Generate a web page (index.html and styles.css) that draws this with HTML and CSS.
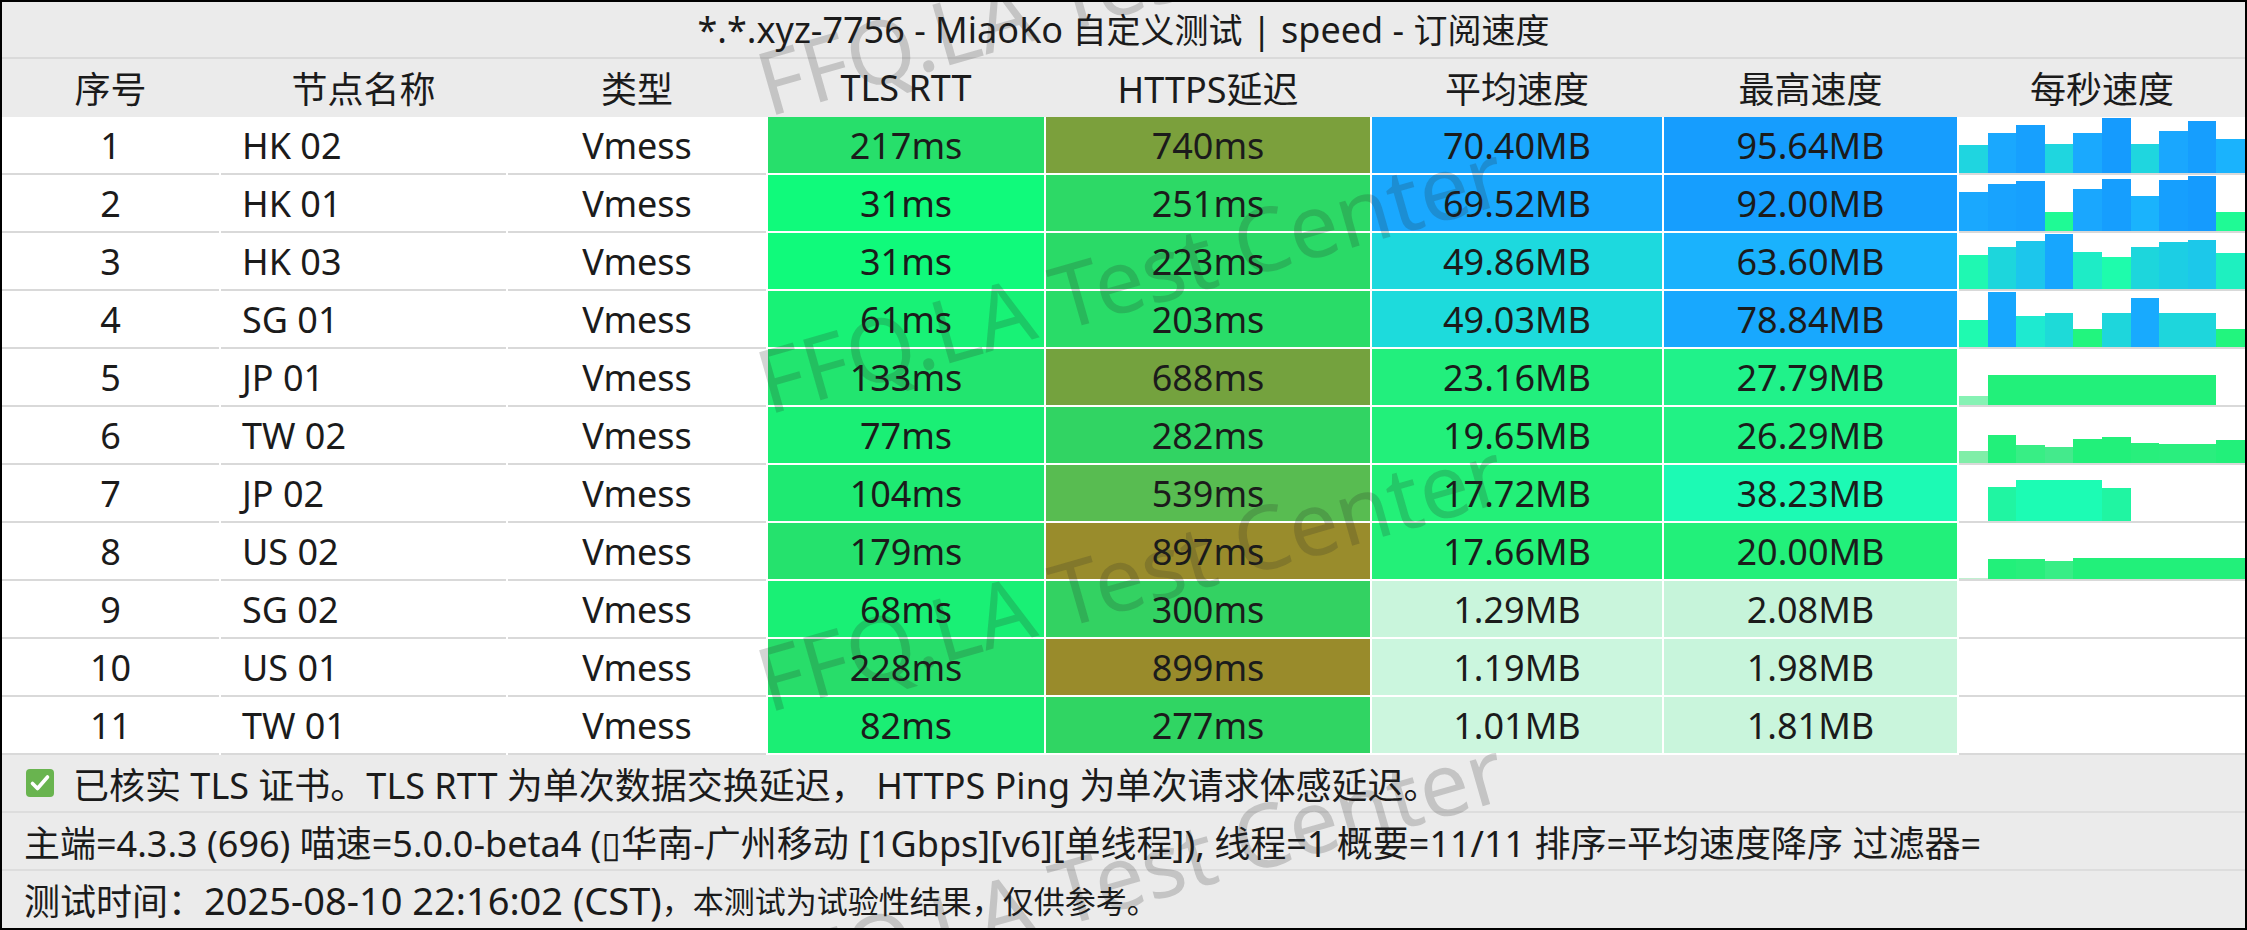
FILE: index.html
```html
<!DOCTYPE html>
<html lang="zh-CN">
<head>
<meta charset="utf-8">
<title>MiaoKo 自定义测试</title>
<link rel="stylesheet" href="styles.css">
</head>
<body>
<div class="frame">
  <div class="title">*.*.xyz-7756 - MiaoKo <span class="cj">自定义测试</span> | speed - <span class="cj">订阅速度</span></div>
  <div class="row head">
    <div class="cell">序号</div><div class="cell">节点名称</div><div class="cell">类型</div><div class="cell">TLS RTT</div><div class="cell">HTTPS延迟</div><div class="cell">平均速度</div><div class="cell">最高速度</div><div class="cell">每秒速度</div>
  </div>

  <div class="row">
    <div class="cell w">1</div><div class="cell w name">HK 02</div><div class="cell w">Vmess</div>
    <div class="cell c" style="background:#27df6b">217ms</div>
    <div class="cell c" style="background:#7ba03c">740ms</div>
    <div class="cell c" style="background:#1aa7fe">70.40MB</div>
    <div class="cell c" style="background:#169dfe">95.64MB</div>
    <div class="cell w bars"><i style="height:50%;background:#1fd5e0"></i><i style="height:71%;background:#1aa8fe"></i><i style="height:86%;background:#17a0fe"></i><i style="height:52%;background:#1fd6df"></i><i style="height:71%;background:#1aa9fe"></i><i style="height:98%;background:#159bfe"></i><i style="height:52%;background:#1fd6df"></i><i style="height:75%;background:#1aa7fe"></i><i style="height:93%;background:#169efe"></i><i style="height:61%;background:#1ab3fd"></i></div>
  </div>
  <div class="row">
    <div class="cell w">2</div><div class="cell w name">HK 01</div><div class="cell w">Vmess</div>
    <div class="cell c" style="background:#10fa7b">31ms</div>
    <div class="cell c" style="background:#2dd966">251ms</div>
    <div class="cell c" style="background:#1aa8fe">69.52MB</div>
    <div class="cell c" style="background:#169efe">92.00MB</div>
    <div class="cell w bars"><i style="height:70%;background:#1aa8fe"></i><i style="height:84%;background:#18a3fe"></i><i style="height:89%;background:#17a0fe"></i><i style="height:34%;background:#1ffa95"></i><i style="height:75%;background:#1aa7fe"></i><i style="height:93%;background:#169efe"></i><i style="height:63%;background:#1ab3fd"></i><i style="height:91%;background:#169ffe"></i><i style="height:98%;background:#159bfe"></i><i style="height:34%;background:#1ffa95"></i></div>
  </div>
  <div class="row">
    <div class="cell w">3</div><div class="cell w name">HK 03</div><div class="cell w">Vmess</div>
    <div class="cell c" style="background:#10fa7b">31ms</div>
    <div class="cell c" style="background:#2ada67">223ms</div>
    <div class="cell c" style="background:#1dd9de">49.86MB</div>
    <div class="cell c" style="background:#1ab2fd">63.60MB</div>
    <div class="cell w bars"><i style="height:61%;background:#1ff8b2"></i><i style="height:75%;background:#1dd6dc"></i><i style="height:86%;background:#1cc6ec"></i><i style="height:98%;background:#17a6fe"></i><i style="height:66%;background:#1eecc6"></i><i style="height:57%;background:#1efcac"></i><i style="height:75%;background:#1dd6dc"></i><i style="height:84%;background:#1ccee4"></i><i style="height:88%;background:#1cc8ea"></i><i style="height:64%;background:#1ef0c0"></i></div>
  </div>
  <div class="row">
    <div class="cell w">4</div><div class="cell w name">SG 01</div><div class="cell w">Vmess</div>
    <div class="cell c" style="background:#18f276">61ms</div>
    <div class="cell c" style="background:#29dc68">203ms</div>
    <div class="cell c" style="background:#1ddbdc">49.03MB</div>
    <div class="cell c" style="background:#18a8fe">78.84MB</div>
    <div class="cell w bars"><i style="height:48%;background:#1ffab0"></i><i style="height:98%;background:#17a7fe"></i><i style="height:55%;background:#1eead0"></i><i style="height:61%;background:#1edad8"></i><i style="height:32%;background:#22f57e"></i><i style="height:61%;background:#1ed6dc"></i><i style="height:88%;background:#18aafe"></i><i style="height:61%;background:#1ed6dc"></i><i style="height:61%;background:#1ed6dc"></i><i style="height:32%;background:#22f57e"></i></div>
  </div>
  <div class="row">
    <div class="cell w">5</div><div class="cell w name">JP 01</div><div class="cell w">Vmess</div>
    <div class="cell c" style="background:#22e56f">133ms</div>
    <div class="cell c" style="background:#74a23e">688ms</div>
    <div class="cell c" style="background:#22ef7d">23.16MB</div>
    <div class="cell c" style="background:#20f28a">27.79MB</div>
    <div class="cell w bars"><i style="height:16%;background:#86f2b4"></i><i style="height:54%;background:#22f07a"></i><i style="height:54%;background:#22f07a"></i><i style="height:54%;background:#22f07a"></i><i style="height:54%;background:#22f07a"></i><i style="height:54%;background:#22f07a"></i><i style="height:54%;background:#22f07a"></i><i style="height:54%;background:#22f07a"></i><i style="height:54%;background:#22f07a"></i><i style="height:0%"></i></div>
  </div>
  <div class="row">
    <div class="cell w">6</div><div class="cell w name">TW 02</div><div class="cell w">Vmess</div>
    <div class="cell c" style="background:#1aef75">77ms</div>
    <div class="cell c" style="background:#31d463">282ms</div>
    <div class="cell c" style="background:#22f07a">19.65MB</div>
    <div class="cell c" style="background:#21f285">26.29MB</div>
    <div class="cell w bars"><i style="height:21%;background:#80eea8"></i><i style="height:50%;background:#22f07a"></i><i style="height:32%;background:#38ee85"></i><i style="height:29%;background:#44ea8c"></i><i style="height:43%;background:#22f07a"></i><i style="height:46%;background:#22f07a"></i><i style="height:36%;background:#28ef7c"></i><i style="height:34%;background:#2aee7e"></i><i style="height:34%;background:#2aee7e"></i><i style="height:41%;background:#22f07a"></i></div>
  </div>
  <div class="row">
    <div class="cell w">7</div><div class="cell w name">JP 02</div><div class="cell w">Vmess</div>
    <div class="cell c" style="background:#1eea72">104ms</div>
    <div class="cell c" style="background:#58bc51">539ms</div>
    <div class="cell c" style="background:#23f078">17.72MB</div>
    <div class="cell c" style="background:#1cfab4">38.23MB</div>
    <div class="cell w bars"><i style="height:0%"></i><i style="height:61%;background:#20f5a2"></i><i style="height:73%;background:#1cfcb4"></i><i style="height:73%;background:#1cfcb4"></i><i style="height:73%;background:#1cfcb4"></i><i style="height:59%;background:#20f5a2"></i><i style="height:0%"></i><i style="height:0%"></i><i style="height:0%"></i><i style="height:0%"></i></div>
  </div>
  <div class="row">
    <div class="cell w">8</div><div class="cell w name">US 02</div><div class="cell w">Vmess</div>
    <div class="cell c" style="background:#25e26d">179ms</div>
    <div class="cell c" style="background:#998c2c">897ms</div>
    <div class="cell c" style="background:#23f078">17.66MB</div>
    <div class="cell c" style="background:#22f07a">20.00MB</div>
    <div class="cell w bars"><i style="height:2%;background:#c0f0d0"></i><i style="height:36%;background:#22f07a"></i><i style="height:36%;background:#28ef7c"></i><i style="height:32%;background:#38ee86"></i><i style="height:38%;background:#22f07a"></i><i style="height:38%;background:#22f07a"></i><i style="height:38%;background:#22f07a"></i><i style="height:38%;background:#22f07a"></i><i style="height:38%;background:#22f07a"></i><i style="height:38%;background:#22f07a"></i></div>
  </div>
  <div class="row">
    <div class="cell w">9</div><div class="cell w name">SG 02</div><div class="cell w">Vmess</div>
    <div class="cell c" style="background:#19f075">68ms</div>
    <div class="cell c" style="background:#33d262">300ms</div>
    <div class="cell c" style="background:#c9f5dc">1.29MB</div>
    <div class="cell c" style="background:#c6f4da">2.08MB</div>
    <div class="cell w bars"></div>
  </div>
  <div class="row">
    <div class="cell w">10</div><div class="cell w name">US 01</div><div class="cell w">Vmess</div>
    <div class="cell c" style="background:#28dd6a">228ms</div>
    <div class="cell c" style="background:#998b2b">899ms</div>
    <div class="cell c" style="background:#cbf6de">1.19MB</div>
    <div class="cell c" style="background:#c8f5dc">1.98MB</div>
    <div class="cell w bars"></div>
  </div>
  <div class="row">
    <div class="cell w">11</div><div class="cell w name">TW 01</div><div class="cell w">Vmess</div>
    <div class="cell c" style="background:#1bee74">82ms</div>
    <div class="cell c" style="background:#30d563">277ms</div>
    <div class="cell c" style="background:#ccf6de">1.01MB</div>
    <div class="cell c" style="background:#c9f5dc">1.81MB</div>
    <div class="cell w bars"></div>
  </div>

  <div class="foot">
    <div class="line"><svg class="check" viewBox="0 0 28 28" width="28" height="28"><rect x="0" y="0" width="28" height="28" rx="4" fill="#69b44f"/><path d="M6.5 14.5 L11.5 19.5 L21.5 8" fill="none" stroke="#fff" stroke-width="3.6" stroke-linecap="round" stroke-linejoin="round"/></svg><span>已核实 TLS 证书。TLS RTT 为单次数据交换延迟， HTTPS Ping 为单次请求体感延迟。</span></div>
    <div class="line">主端=4.3.3 (696) 喵速=5.0.0-beta4 (▯华南-广州移动 [1Gbps][v6][单线程]), 线程=1 概要=11/11 排序=平均速度降序 过滤器=</div>
    <div class="line last"><span class="cj">测试时间：</span><span class="num">2025-08-10 22:16:02 (CST)</span><span class="cjs">，本测试为试验性结果，仅供参考。</span></div>
  </div>

  <div class="wm wm1">FFQ.LA Test Center</div>
  <div class="wm wm2">FFQ.LA Test Center</div>
  <div class="wm wm3">FFQ.LA Test Center</div>
  <div class="wm wm4">FFQ.LA Test Center</div>
</div>
</body>
</html>
```

FILE: styles.css
```css
html, body {
  margin: 0;
  padding: 0;
  background: #ffffff;
}

.frame {
  position: relative;
  width: 2247px;
  height: 930px;
  box-sizing: border-box;
  border: 2px solid #000;
  overflow: hidden;
  background: #ffffff;
  font-family: "Noto Sans", "Noto Sans CJK SC", "DejaVu Sans", sans-serif;
  font-size: 36px;
  color: #1b1b1b;
}

.title {
  height: 55px;
  line-height: 55px;
  border-bottom: 2px solid #dadada;
  background: #ebebeb;
  text-align: center;
  white-space: nowrap;
}

.title .cj {
  font-size: 34px;
}

.row {
  display: grid;
  grid-template-columns: 217px 285px 258px 276px 324px 290px 293px 286px;
  column-gap: 2px;
  background: #ffffff;
}

.row.head {
  background: #ebebeb;
}

.cell {
  height: 56px;
  display: flex;
  align-items: center;
  justify-content: center;
  white-space: nowrap;
  border-bottom: 2px solid #ffffff;
}

.head .cell {
  background: #ebebeb;
  border-bottom-color: #ebebeb;
}

.cell.w {
  border-bottom-color: #d9d9d9;
}

.cell.name {
  justify-content: flex-start;
  padding-left: 21px;
}

.cell.bars {
  align-items: flex-end;
  justify-content: flex-start;
}

.bars i {
  display: block;
  flex: 1 1 0;
}

.foot {
  background: #ebebeb;
}

.line {
  height: 56px;
  border-bottom: 2px solid #dddddd;
  display: flex;
  align-items: center;
  padding-left: 22px;
  white-space: nowrap;
}

.line.last {
  height: 57px;
  border-bottom: none;
}

.line .num {
  font-size: 38px;
}

.line .cjs {
  font-size: 31px;
}

.check {
  margin-left: 2px;
  margin-right: 19px;
  flex: none;
}

.wm {
  position: absolute;
  left: 1128px;
  font-size: 88px;
  line-height: 1;
  color: rgba(40, 40, 40, 0.2);
  white-space: nowrap;
  pointer-events: none;
  transform: translate(-50%, -50%) rotate(-16deg);
}

.wm1 { top: -24px; }
.wm2 { top: 274px; }
.wm3 { top: 572px; }
.wm4 { top: 870px; }
```
